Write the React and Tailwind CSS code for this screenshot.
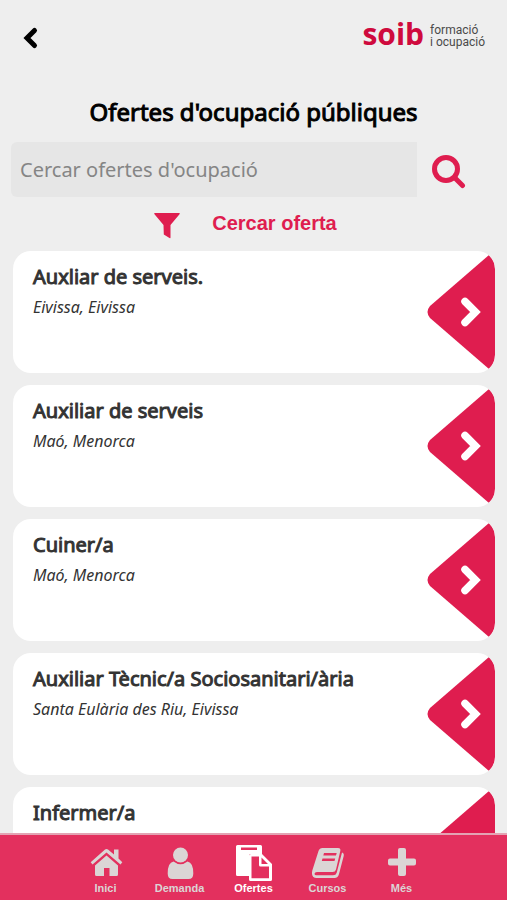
import React, { useState } from "react";

const offers = [
  { id: 1, title: "Auxliar de serveis.", place: "Eivissa, Eivissa" },
  { id: 2, title: "Auxiliar de serveis", place: "Maó, Menorca" },
  { id: 3, title: "Cuiner/a", place: "Maó, Menorca" },
  { id: 4, title: "Auxiliar Tècnic/a Sociosanitari/ària", place: "Santa Eulària des Riu, Eivissa" },
  { id: 5, title: "Infermer/a" },
];

const HomeIcon = () => (
  <svg viewBox="0 0 34 36" className="h-9 w-[34px]" fill="currentColor" aria-hidden="true">
    <path d="M16 4.500q1.500-1.200 3 0L25 9.500V4.500h4.500V13.500l3.800 3.700-1.800 2.300L17.500 7.500 3.500 19.500 1.700 17.200Z" />
    <path d="M17.500 10.500 29 20.500v9q0 1.500-1.500 1.500H20.500v-8h-5.500v8H7.500Q6 31 6 29.500v-9Z" />
  </svg>
);

const UserIcon = () => (
  <svg viewBox="0 0 34 36" className="h-9 w-[34px]" fill="currentColor" aria-hidden="true">
    <circle cx="17.500" cy="10" r="7.500" />
    <path d="M10.500 16.500q7 5.500 14 0 5.800 1 5.800 12 0 5.500-4.800 5.500h-16q-4.800 0-4.800-5.500 0-11 5.800-12Z" />
  </svg>
);

const DocsIcon = () => (
  <svg viewBox="0 0 36 36" className="h-9 w-9" fill="currentColor" aria-hidden="true">
    <path
      fillRule="evenodd"
      d="M1.500 0h23Q26 0 26 1.500V9H14.500Q13 9 13 10.500V31H1.500Q0 31 0 29.500v-28Q0 0 1.500 0ZM5 2.500V5h16V2.500Z"
    />
    <path
      fillRule="evenodd"
      d="M15 9h11l10 10v15.500q0 1.500-1.500 1.500h-20Q13 36 13 34.500V10.500Q13 9 15 9ZM15.500 11.500v21.700h17.500V21.500H24.500Q23 21.500 23 20v-8.500ZM25.500 12.500V19h6.500Z"
    />
  </svg>
);

const BookIcon = () => (
  <svg viewBox="0 0 34 36" className="h-9 w-[34px]" fill="currentColor" aria-hidden="true">
    <path
      fillRule="evenodd"
      d="M11.500 3H27q3 0 2.300 3L25 24.500q-.6 2.500-3.500 2.500H6q-2.300 0-2.500 1.700 0 1.500 2 1.500h16.500q3 0 3.700-2.500L31 7.500q2.300.7 1.700 3.500L28 29q-1 4-4.500 4H5.500Q1.500 33 1 29q-.2-1.500.3-3.500L7.500 6q1-3 4-3ZM13 8l-.7 2.500H25l.7-2.500ZM11.500 13.500 10.800 16h12.700l.7-2.500Z"
    />
  </svg>
);

const PlusIcon = () => (
  <svg viewBox="0 0 34 36" className="h-9 w-[34px]" fill="currentColor" aria-hidden="true">
    <path d="M15 3h4q2 0 2 2v8.500h8q2 0 2 2v3q0 2-2 2h-8V29q0 2-2 2h-4q-2 0-2-2v-8.500H5q-2 0-2-2v-3q0-2 2-2h8V5q0-2 2-2Z" />
  </svg>
);

const tabs = [
  { label: "Inici", Icon: HomeIcon },
  { label: "Demanda", Icon: UserIcon },
  { label: "Ofertes", Icon: DocsIcon },
  { label: "Cursos", Icon: BookIcon },
  { label: "Més", Icon: PlusIcon },
];

function Logo() {
  return (
    <div className="flex items-center gap-[6px]">
      <span className="font-['Open_Sans',sans-serif] text-[30px] leading-9 font-bold text-[#cf0a3d]">soib</span>
      <p className="pt-1 font-['Roboto',sans-serif] text-[12px] leading-3 text-[#4a4a4a]">
        formació
        <br />i ocupació
      </p>
    </div>
  );
}

function OfferCard({ offer }) {
  return (
    <li className="flex h-[122px] shrink-0 items-center justify-between overflow-hidden rounded-[18px] bg-white">
      <div className="self-stretch pt-3 pl-5">
        <h2 className="text-xl leading-7 text-[#333] [-webkit-text-stroke:1px_#333]">{offer.title}</h2>
        {offer.place && <p className="mt-1 text-base leading-6 text-[#333] italic">{offer.place}</p>}
      </div>
      <button type="button" aria-label={`Veure ${offer.title}`} className="shrink-0">
        <svg viewBox="0 0 68 114" className="h-[114px] w-[68px]">
          <path d="M62 0 Q68 6 68 14V100Q68 108 62 114L3 63Q-2 57 3 51Z" fill="#df1d4f" />
          <path
            d="m38 46.500 10.500 10.500L38 67.500"
            fill="none"
            stroke="#fff"
            strokeWidth="7.500"
            strokeLinecap="round"
          />
        </svg>
      </button>
    </li>
  );
}

export default function App() {
  const [query, setQuery] = useState("");
  const [active, setActive] = useState("Ofertes");

  return (
    <div className="flex h-screen flex-col overflow-hidden bg-[#eee] font-['Noto_Sans',sans-serif]">
      <header className="flex shrink-0 items-start justify-between pt-4 pr-[22px] pl-5">
        <button type="button" aria-label="Enrere" className="pt-2">
          <svg viewBox="0 0 22 28" className="h-7 w-[22px]">
            <path d="M14.500 6.500 7 14l7.500 7.500" fill="none" stroke="#000" strokeWidth="5" strokeLinecap="round" />
          </svg>
        </button>
        <Logo />
      </header>

      <h1 className="mt-[42px] shrink-0 text-center text-2xl leading-9 text-black [-webkit-text-stroke:1px_#000]">
        Ofertes d'ocupació públiques
      </h1>

      <form className="mt-3 flex shrink-0 items-center pr-[41px] pl-[11px]" onSubmit={(e) => e.preventDefault()}>
        <input
          type="text"
          aria-label="Cercar ofertes d'ocupació"
          placeholder="Cercar ofertes d'ocupació"
          value={query}
          onChange={(e) => setQuery(e.target.value)}
          className="h-[55px] min-w-0 flex-1 rounded-l-md bg-[#e6e6e6] px-[9px] text-xl text-[#333] outline-none placeholder:text-[#858585]"
        />
        <button type="submit" aria-label="Cercar" className="ml-[15px] pt-1">
          <svg viewBox="0 0 34 34" className="size-[34px]" fill="none" stroke="#df1d4f" strokeWidth="5">
            <circle cx="14" cy="14" r="11.500" />
            <path d="m22.500 22.500 8 8" strokeLinecap="round" />
          </svg>
        </button>
      </form>

      <button
        type="button"
        className="mt-3 flex shrink-0 items-start justify-center gap-8 self-center pr-4 text-[#df1d4f]"
      >
        <svg viewBox="0 0 26 26" className="mt-1 size-[26px]" fill="currentColor">
          <path d="M.8 0h24.400q1.200 0 .3 1.200L16.500 12v12.500q0 1-1 .5L9.800 21.500 9.500 12 .5 1.200Q-.4 0 .8 0Z" />
        </svg>
        <span className="font-['Liberation_Sans',sans-serif] text-xl leading-7 font-bold">Cercar oferta</span>
      </button>

      <ul className="mt-3 flex min-h-0 flex-1 flex-col gap-3 overflow-y-auto pr-3 pl-[13px] [scrollbar-width:none]">
        {offers.map((offer) => (
          <OfferCard key={offer.id} offer={offer} />
        ))}
      </ul>

      <nav className="flex h-[67px] shrink-0 justify-center border-t-2 border-[#e3a3b3] bg-[#e3305e] pt-[10px] font-['Liberation_Sans',sans-serif]">
        {tabs.map(({ label, Icon }) => (
          <button
            key={label}
            type="button"
            onClick={() => setActive(label)}
            className={`flex w-[74px] flex-col items-center text-[11px] leading-3 font-bold ${
              active === label ? "text-white" : "text-[#dbd5d5]"
            }`}
          >
            <Icon />
            <span className="mt-px">{label}</span>
          </button>
        ))}
      </nav>
    </div>
  );
}
